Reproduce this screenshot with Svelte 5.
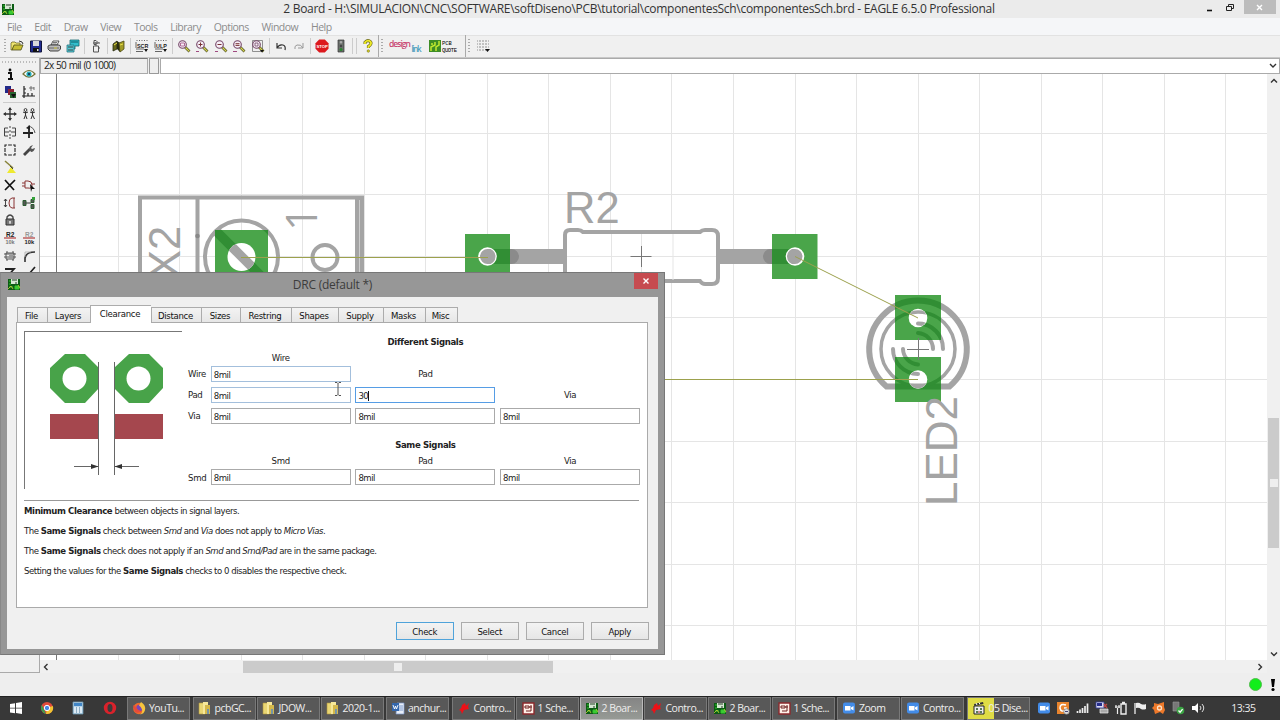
<script lang="ts">
	type Shape = {
		d?: string;
		f?: string;
		s?: string;
		w?: number;
		t?: string;
		x?: number;
		y?: number;
		size?: number;
	};

	const p = (d: string, f = 'none', s = 'none', w = 1): Shape => ({ d, f, s, w });
	const t = (text: string, x: number, y: number, size: number, f = '#222'): Shape => ({ t: text, x, y, size, f });
	const disc = (x: number, y: number, r: number) => `M${x - r} ${y}a${r} ${r} 0 1 0 ${r * 2} 0a${r} ${r} 0 1 0 ${-r * 2} 0`;

	const lens = (extra: Shape[]) => [
		p('M8 8l4.5 4.5', 'none', '#55552a', 2.6),
		p('M8.5 8.5l3.8 3.8', 'none', '#d8d850', 1.2),
		p(disc(5.5, 5.5, 3.8), '#f6eef6', '#754668', 1.1),
		...extra
	];

	const icons: Record<string, Shape[]> = {
		board: [
			p('M1 2h12v11H1z', '#0b5c14'),
			p('M4 2h7v5H4z', '#d5e8d2'),
			p('M2 4h2M2 7h2M2 10h4M8 9h4v3H8z', '#3ecb36', '#35c72d'),
			p('M5 3h5M9 5v2', 'none', '#263c29'),
			p('M1 12l3-3 2 3M11 8l2 3', 'none', '#e7d73b', 0.7)
		],
		sch: [
			p('M2 2h11v11H2z', '#fff0e8', '#8c292c', 1.4),
			p('M4 5h4v2H4zM8 6h3M5 10h5M10 4v6', 'none', '#6f2020')
		],
		open: [
			p('M1 4l1-1h3l1 1h4v3H4l-2 4H1z', '#efe570', '#6e6b2a', 0.8),
			p('M2 11l2-5h9l-2 5z', '#c7be35', '#4e4c17', 0.8),
			p('M9 2l3 1 1 2', 'none', '#333')
		],
		save: [p('M1.5 2h11v11h-11z', '#222c91', '#10143c'), p('M4 2h6v5H4z', '#d8d8dd'), p('M4 9h6v4H4z', '#111'), p('M8 10h1.5v2H8z', '#ddd')],
		print: [
			p('M4 6l2-4h6l-2 4z', '#fff', '#444', 0.9),
			p('M1 7l2-1h9l1.5 1v3l-2 2H3l-2-2z', '#bbb', '#333', 0.9),
			p('M2 9h10M6 3.5h4M5.5 5h4', 'none', '#555', 0.8),
			p('M7 9h3', 'none', '#d7cf46')
		],
		cam: [
			p('M4 1h9v6H9v3H4z', '#31bfcd', '#12646c', 0.8),
			p('M1 6h7v7H1z', '#57cbd6', '#277580', 0.8),
			p('M5 3h7', 'none', '#176d77', 1.2),
			p('M2 8h5M2 11h5', 'none', '#333', 0.9)
		],
		gate: [p('M4.5 7h5v6h-5zM7 3v4M4 4h7M5 1.5h2l2 2-2 2H5zM4 9h1M9 9h2', 'none', '#555', 1)],
		library: [
			p('M1 5l4-3v8l-4 2z', '#65661a', '#282b12', 0.8),
			p('M5 2l3 2v9l-3-3z', '#282b12'),
			p('M7 4l5-2v8l-4 3z', '#a19b28', '#4a4912', 0.8),
			p('M2 6l3-2M8 6l3-1', 'none', '#e9df47')
		],
		scr: [p('M1.5 1.5h1M4 1.5h1M6.500 1.500h1M9 1.500h1M11.500 1.500h1M1 10h8M1 12.500h7M1 3v6', 'none', '#555', 0.9), t('SCR', 2, 8.5, 5.4), p('M9 10h4l-2 3z', '#111')],
		ulp: [p('M1.5 1.5h1M4 1.5h1M6.500 1.500h1M9 1.500h1M11.500 1.500h1M1 10h8M1 12.500h7M1 3v6', 'none', '#555', 0.9), t('ULP', 2, 8.5, 5.4), p('M9 10h4l-2 3z', '#111')],
		zoomFit: lens([p('M3.5 4h4v3h-4z', 'none', '#a04a80', 0.8)]),
		zoomIn: lens([p('M3.5 5.5h4M5.5 3.5v4', 'none', '#733'), p('M1 12.5h3', 'none', '#a04a80')]),
		zoomOut: lens([p('M3.5 5.5h4', 'none', '#733'), p('M1 12.5h3', 'none', '#a04a80')]),
		zoomRedraw: lens([p('M3.5 4.7h4M3.5 6.4h4', 'none', '#733'), p('M1 12.5h4', 'none', '#a04a80')]),
		zoomSelect: [p('M1.5 1.5h10v11h-10z', 'none', '#777', 0.8), ...lens([p('M4 4h3v3H4z', 'none', '#754668', 0.8)]), p('M9 11h4l-2 2.5z', '#111')],
		undo: [p('M3 4v5h5M3 9q2-4 6-3 3 1 2 5', 'none', '#333', 1.2)],
		redo: [p('M11 4v5H6M11 9Q9 5 5 6q-3 1-2 4', 'none', '#999', 1)],
		stop: [p('M4.2 .5h5.600L13.500 4.200v5.600L9.800 13.500H4.200L.5 9.800V4.200z', '#dc191d'), t('STOP', 1.4, 8.7, 4.2, '#fff')],
		traffic: [p('M4 1h6v12H4z', '#6c716d', '#333', 0.7), p(disc(7, 3.3, 1.3), '#aaa'), p(disc(7, 7, 1.3), '#444'), p(disc(7, 10.5, 1.5), '#27852d')],
		help: [p('M4 5V3.3q3-3 5.6-.5 1.5 2.2-2.2 4.7V9', 'none', '#6a681a', 3), p('M4 5V3.3q3-3 5.6-.5 1.5 2.2-2.2 4.7V9', 'none', '#eeea25', 1.8), p(disc(7.3, 12, 1.2), '#e7df22', '#6a681a', 0.6)],
		grid: [p('M1 2h12M1 5h12M1 8h12M1 11h9', 'none', '#666', 1.1), p('M2.500 1v12M5.500 1v12M8.500 1v12M11.500 1v8', 'none', '#f0f0f0', 1.6), p('M9 10h5l-2.5 3z', '#111')],
		info: [p(disc(7, 3, 1.4), '#111'), p('M5 6h3v6M5 12h5', 'none', '#111', 2)],
		eye: [p('M1 7q6-7 12 0-6 6-12 0z', '#fff', '#75763a', 1.2), p(disc(7, 7, 2.6), '#22a9b5'), p(disc(7, 7, 1), '#124')],
		layers: [p('M2 1h6v7H2z', '#222989'), p('M5 4h6v6H5z', '#8b2231'), p('M7 7h6v6H7z', '#286430'), p('M8 9h5l-2.5 4z', '#111')],
		mark: [p('M2 1v12M0 11h13M2 4h2M2 8h2M6 8v3M10 8v3', 'none', '#222', 1.2), p('M7 3h5M9 1v5M12 2v3', 'none', '#555', 0.8)],
		move: [p('M7 1v12M1 7h12', 'none', '#333', 1.3), p('M7 0l2 3H5zM7 14l-2-3h4zM0 7l3-2v4zM14 7l-3 2V5z', '#333')],
		copy: [p('M3.5 4v4M10.5 4v4M1 5l2.5 1L6 5M8 5l2.5 1L13 5M3.5 8L2 12M3.5 8L5 12M10.5 8L9 12M10.5 8l2 4', 'none', '#333', 1), p(disc(3.5, 3, 1.4), '#fff', '#333'), p(disc(10.5, 3, 1.4), '#fff', '#333')],
		mirror: [p('M5 3H1.5v8H5M9 3h3.5v8H9M2 7h4M8 7h4', 'none', '#444'), p('M7 1v2M7 5v2M7 9v2M7 12v2', 'none', '#444')],
		rotate: [p('M7 2v11M1 8h10', 'none', '#222', 1.8), p('M6 1q6 1 7 7', 'none', '#555'), p('M4 3l4-3v5z', '#222')],
		group: [p('M2 2h10v10H2z', 'none', '#222', 1.1), p('M4.5 1v12M9.5 1v12M1 4.5h12M1 9.5h12', 'none', '#f0f0f0', 1.2)],
		wrench: [p('M2 12l6-6', 'none', '#444', 2.8), p('M7 6q0-3 4-4l-2 3 1 1 3-1q-1 4-4 4z', '#555')],
		paint: [p('M2 1l8 7', 'none', '#88843b', 1.5), p('M8 7l5 6H4z', '#eee92f'), p('M7 6l3 3', 'none', '#444', 1)],
		del: [p('M2 2l9 10M12 2L2 12', 'none', '#111', 1.7)],
		gateDelete: [p('M3 3h3q4 0 4 4t-4 3H3zM0 5h3M0 8h3M10 6h3', 'none', '#8a3434'), p('M8 6l5 5-3 0-1 3z', '#111')],
		pinswap: [p('M12 2H9Q6 2.500 6 7t3 5h3M11 2v10', 'none', '#8a3434'), p('M2.500 3v8M1 5l1.500-2L4 5M1 9l1.500 2L4 9', 'none', '#333', 0.9)],
		replace: [p('M1 7h4M5 7h4', 'none', '#333'), p('M1 4.500h3v5H1zM9 8.500h3v4H9zM9 3.500h3v3H9z', '#555', '#2b5c30'), p('M10 1h3v3h-3z', '#34a13a')],
		lock: [p('M4 6V4q3-4 6 0v2', 'none', '#444', 1.3), p('M3 6h8v6H3z', '#777', '#333'), p('M7 8v3M6 9h2', 'none', '#eee')],
		name: [t('R2', 3, 6, 6.5), p('M1 7h12', 'none', '#b33c3c', 1.2), t('10k', 2.5, 13, 5.5, '#777')],
		value: [t('R2', 3, 6, 6.5, '#999'), p('M1 7h12', 'none', '#b33c3c', 1.2), t('10k', 2.5, 13, 5.8)],
		smash: [p('M3 4h8v6H3zM1 5h12M1 8h12M4 2v2M10 2v2M4 10v2M10 10v2', 'none', '#555'), p('M6 6h4v4H6z', '#999')],
		miter: [p('M3 13V9q1-6 10-6', 'none', '#333', 1.6), p('M3 8V3h6', 'none', '#aaa', 0.8)],
		split: [p('M2 3h9L3 12', 'none', '#222', 1.8)],
		route: [p('M13 1L7 8l-3 3', 'none', '#222', 1.7)],
		windows: [p('M1 3l5-.8v4.6H1zM7 2l6-1v5.8H7zM1 7.6h5v4.6l-5-.7zM7 7.6h6V13l-6-.9z', '#fff')],
		chrome: [
			p(disc(7, 7, 6), '#e04b3b'),
			p('M1.8 4L6 12.8A6 6 0 0 1 1.8 4z', '#39a14c'),
			p('M7 7l5.8-2A6 6 0 0 1 6 12.9z', '#f2c432'),
			p(disc(7, 7, 2.7), '#4a87e6', '#fff', 1)
		],
		calc: [p('M2 1h10v12H2z', '#b7d4e8', '#6b94ad', 0.8), p('M3 2h8v3H3z', '#4085c6'), p('M3 7h8M3 9h8M3 11h8', 'none', '#fff'), p('M5.5 6v6M8.5 6v6', 'none', '#6b94ad', 0.7)],
		opera: [p(disc(7, 7, 6.2), '#d9222b'), p('M4.5 7a2.5 4 0 1 0 5 0a2.5 4 0 1 0-5 0', '#3b3b3b')],
		firefox: [
			p(disc(7, 7.5, 5.8), '#ee6a2b'),
			p(disc(7.5, 7, 3.2), '#7746b8'),
			p('M9 1q5 3 4 8-1 4-5 4.5 3-2 2-5-1-3-3-4z', '#f6c43d'),
			p('M1 4l3 2q2 4 6 4-4 3-7 1z', '#e64b3b')
		],
		folder: [p('M1 2h5l1 1v10H1z', '#e9d673', '#ae963d', 0.6), p('M5 1h5v12H5z', '#f6e89a'), p('M7 4h5v9H7z', '#d4b84b'), p('M9 8h2v5H9z', '#7595a8')],
		word: [p('M6 2h7v11H5z', '#e8eef8', '#7d9acb', 0.7), p('M7 5h5M7 7h5M7 9h5', 'none', '#6285c0', 0.8), p('M1 2h7v8H1z', '#3467ac'), p('M2 4l1.5 4 1-3 1 3L7 4', 'none', '#fff', 0.9)],
		eagle: [p('M2 9q3-2 3-5l3-2 1 3 3-3-1 4 1 2-5 1-2 4-1-3z', '#ed1117')],
		zoom: [p('M3 1.5h8q2 0 2 2v7q0 2-2 2H3q-2 0-2-2v-7q0-2 2-2z', '#438ce8'), p('M3 5h5.5v4.5H3zM9 6.5L11.5 5v4.5L9 8z', '#fff')],
		clap: [p('M2 5h10v8H2z', '#eee', '#222'), p('M2 3l9-2 .5 2-9 2z', '#333'), p('M4 2l1 2M7 1.5l1 2', 'none', '#fff'), p('M4 7h2v2H4zM8 7h2v2H8zM4 10h2v2H4zM8 10h2v2H8z', '#5a7b56'), p('M7 10v2', 'none', '#a33')],
		update: [p('M1 1h12v12H1z', '#e8842d'), p('M10 4q-6-2-6 3 1 5 6 2V7H8', 'none', '#fff', 1.5), p(disc(10.5, 10.5, 2.8), '#ddd', '#7a7a7a', 0.7), p('M9 10.5h3', 'none', '#447')],
		signal: [p('M2.5 12v-2M5 12V8.5M7.5 12V7M10 12V5M12.5 12V2.5', 'none', '#eee', 1.7)],
		network: [p('M1 1h8v6H1z', '#d9d9ee', '#333c9e', 0.8), p('M2 2h5v3H2z', '#262e8d'), p('M5 8h8v4H5z', '#aaa', '#eee', 0.7), p('M9 3l3 4M12 3L9 6', 'none', '#bb4747', 1.3)],
		battery: [p('M7 3h5v10H7zM8 1.5h3', 'none', '#eee', 1.4), p('M1 6h5M2 4v3M5 4v3M3.5 7v6', 'none', '#eee', 1.2)],
		flag: [p('M2 2v11', 'none', '#eee', 1.3), p('M3 2q3-1 5 1 3 1 5 0v5q-3 1-5 0-2-2-5-1z', '#eee')],
		avast: [p('M2 2l4 1 6-2v5l1 3-2 4-3-2-5 2-1-4-2-2 2-2z', '#ee792a'), p(disc(7.5, 7, 2), 'none', '#ffe2c5', 1.3)],
		usb: [p('M2 1h6v7l2 2H2z', '#777', '#999', 0.6), p(disc(9.5, 9.5, 3.8), '#3aa443'), p('M7.5 9.5l1.6 1.7 2.5-3', 'none', '#fff', 1.3)],
		sound: [p('M1 5h3l3-3v10L4 9H1z', '#fff'), p('M9 5q2 2 0 4M11 3q3.5 4 0 8', 'none', '#ddd', 1)]
	};

	const menus = ['File', 'Edit', 'Draw', 'View', 'Tools', 'Library', 'Options', 'Window', 'Help'];

	const toolbar = [
		['open', 'save', 'print', 'cam'],
		['gate'],
		['library'],
		['scr', 'ulp'],
		['zoomFit', 'zoomIn', 'zoomOut', 'zoomRedraw', 'zoomSelect'],
		['undo', 'redo'],
		['stop', 'traffic']
	];

	const commands = [
		'move', 'copy', 'mirror', 'rotate', 'group', 'wrench', 'paint', '', 'del', 'gateDelete',
		'pinswap', 'replace', 'lock', '', 'name', 'value', 'smash', 'miter', 'split', 'route'
	];

	const tabs = ['File', 'Layers', 'Clearance', 'Distance', 'Sizes', 'Restring', 'Shapes', 'Supply', 'Masks', 'Misc'];
	const tabWidths = [30, 43, 61, 50, 39, 51, 47, 45, 42, 33];
	let activeTab = $state('Clearance');

	const taskGroups = [
		[['firefox', 'YouTu...']],
		[['folder', 'pcbGC...'], ['folder', 'JDOW...'], ['folder', '2020-1...']],
		[['word', 'anchur...']],
		[['eagle', 'Contro...'], ['sch', '1 Sche...'], ['board', '2 Boar...', 'active'], ['eagle', 'Contro...'], ['board', '2 Boar...'], ['sch', '1 Sche...']],
		[['zoom', 'Zoom'], ['zoom', 'Contro...']],
		[['clap', '05 Dise...', 'progress']]
	];

	const tray = ['zoom', 'update', 'signal', 'network', 'battery', 'flag', 'avast', 'usb', 'sound'];

	const gridX = Array.from({ length: 19 }, (_, i) => Math.round(117.5 + i * 61.55) + 0.5);
	const gridY = Array.from({ length: 9 }, (_, i) => Math.round(132.6 + i * 61.6) + 0.5);
</script>

{#snippet icon(name: string)}
	<svg class="icon" viewBox="0 0 14 14">
		{#each icons[name] ?? [] as s}
			{#if s.t}
				<text x={s.x} y={s.y} font-size={s.size} fill={s.f}>{s.t}</text>
			{:else}
				<path d={s.d} fill={s.f} stroke={s.s} stroke-width={s.w} />
			{/if}
		{/each}
	</svg>
{/snippet}

{#snippet field(value: string, kind = '')}
	<div class="field {kind}">{value}</div>
{/snippet}

<div class="screen">
	<header class="titlebar">
		<span class="app-icon">{@render icon('board')}</span>
		<h1>2 Board - H:\SIMULACION\CNC\SOFTWARE\softDiseno\PCB\tutorial\componentesSch\componentesSch.brd - EAGLE 6.5.0 Professional</h1>
		<div class="win-buttons">
			<svg viewBox="0 0 74 18">
				<path d="M1 10.5h5" stroke="#111" stroke-width="1.6" />
				<path d="M20.500 6.500h5v4h-5zM22.500 6V4.500h5v4H26" fill="none" stroke="#222" />
				<path d="M38 0h32v14H38z" fill="#bcbcbc" />
				<path d="M51 5l5 5M56 5l-5 5" stroke="#fff" stroke-width="1.4" />
			</svg>
		</div>
	</header>

	<nav class="menubar">
		{#each menus as item}<span>{item}</span>{/each}
	</nav>

	<div class="toolbar">
		<i class="grip"></i>
		{#each toolbar as group}
			{#each group as name}<span class="tool">{@render icon(name)}</span>{/each}
			<i class="sep"></i>
		{/each}
		<i class="sep"></i>
		<span class="tool">{@render icon('help')}</span>
		<i class="edge"></i>
		<i class="grip"></i>
		<svg class="designlink" viewBox="0 0 34 18">
			<text x="0" y="10" font-size="8.500" fill="#c94471" textLength="22">design</text>
			<text x="22.500" y="15" font-size="8" fill="#4b9dbc" textLength="10">link</text>
		</svg>
		<svg class="quote" viewBox="0 0 30 14">
			<path d="M1 1h12v12H1z" fill="#3e8d24" />
			<path d="M3 12V8l4-2V3M8 12V8l3-2V2M3 5h2" fill="none" stroke="#c1e82f" stroke-width="1.500" />
			<text x="14" y="6" font-size="5.500">PCB</text>
			<text x="14" y="12.500" font-size="5.500" textLength="15">QUOTE</text>
		</svg>
		<i class="edge"></i>
		<i class="grip"></i>
		<span class="tool grid-tool">{@render icon('grid')}</span>
	</div>

	<main class="workspace">
		<aside class="commands">
			<i class="hgrip"></i>
			<div class="pair">
				{#each ['info', 'eye', 'layers', 'mark'] as name}<span>{@render icon(name)}</span>{/each}
			</div>
			<hr />
			<div class="pair">
				{#each commands as name}<span>{@render icon(name)}</span>{/each}
			</div>
		</aside>

		<section class="editor">
			<div class="command-line">
				<span class="coords">2x 50 mil (0 1000)</span>
				<span class="cell"></span>
				<span class="input"><svg viewBox="0 0 8 8"><path d="M1 2l3 3 3-3" fill="none" stroke="#333" stroke-width="1.400" /></svg></span>
			</div>

			<div class="view">
				<svg class="canvas" viewBox="40 74 1227 586">
					<defs>
						<clipPath id="pads">
							<path d="M215 230h53v53h-53zM465 234h45v45h-45zM772 234h45.500v45H772zM895 295h46v45h-46zM895 357h46v45h-46z" />
						</clipPath>
						<clipPath id="holes">
							<circle cx="241.500" cy="257" r="14" />
							<circle cx="487.500" cy="256.500" r="8" />
							<circle cx="795" cy="256.500" r="8" />
							<circle cx="918" cy="318" r="9" />
							<circle cx="918" cy="379.500" r="9" />
						</clipPath>
						<g id="silk" fill="none" stroke="currentColor" stroke-width="4">
							<path d="M140 300V197.500h222V300M197.500 198v100M357 198v100" />
							<circle cx="241.500" cy="257" r="36.500" />
							<path d="M216 231l50 50" stroke-width="9.500" />
							<circle cx="325" cy="257.500" r="12.500" />
							<path d="M487.500 256.500H564M719 256.500h76" stroke-width="15" stroke-linecap="round" />
							<path d="M565 279V235q0-5 5-5h8q3 0 5 2h117q2-2 5-2h7q6 0 6 6v42q0 6-6 6h-7q-3 0-5-3H583q-2 3-5 3h-8q-5 0-5-5z" fill="#fff" />
							<path d="M886.500 386.500a48.800 48.800 0 1 1 63 0z" stroke-width="6" />
							<circle cx="918" cy="349" r="37" stroke-width="3.500" />
							<path d="M918 323.500a25 25 0 0 1 25 25.500M918 333a16 16 0 0 1 15 16M918 374a25 25 0 0 1-25-25M918 364.500a16 16 0 0 1-15-15.500" stroke-linecap="round" />
						</g>
					</defs>

					{#each gridX as x}<path class="grid-line" d="M{x} 74v586" />{/each}
					{#each gridY as y}<path class="grid-line" d="M40 {y}h1227" />{/each}
					<path d="M56.500 74v586" stroke="#777" />

					<use href="#silk" color="#a4a4a4" />
					<path d="M357 198h6v90h-6z" fill="#a4a4a4" />
					<path d="M359.500 200v90" stroke="#ccc" />
					<path d="M641.500 234v46M611.500 234v46M673 234v46M567 256.500h149" class="grid-line" />
					<circle cx="197.500" cy="236" r="2.300" fill="#888" />
					<path d="M510 249h1.500a7.500 7.500 0 0 1 0 15H510zM772 249h-1.500a7.500 7.500 0 0 0 0 15h1.500z" fill="#8b8b8b" />
					<path d="M215 230h53v53h-53zM465 234h45v45h-45zM772 234h45.500v45H772zM895 295h46v45h-46zM895 357h46v45h-46z" fill="#4aa54a" />
					<use href="#silk" color="#318e34" clip-path="url(#pads)" />
					<g fill="#fff">
						<circle cx="241.500" cy="257" r="14" />
						<circle cx="487.500" cy="256.500" r="9.300" />
						<circle cx="795" cy="256.500" r="9.300" />
						<circle cx="918" cy="318" r="9.300" />
						<circle cx="918" cy="379.500" r="9.300" />
					</g>
					<use href="#silk" color="#a4a4a4" clip-path="url(#holes)" />

					<path d="M241 257.500h247M795 256.500l123 61.500M600 379.500h318" fill="none" stroke="#9ca14d" />
					<path d="M630.500 256.500h21M641.500 246v21M907 349.500h22M918.500 338v22" stroke="#777" />

					<g class="silk-text">
						<text x="564" y="222.500" font-size="43.500">R2</text>
						<text transform="translate(957 506) rotate(-90)" font-size="44">LED2</text>
						<text transform="translate(179.500 279) rotate(-90)" font-size="43.500">X2</text>
						<text class="pin" transform="translate(317 231) rotate(-90)" font-size="43">1</text>
					</g>
				</svg>

				<div class="vscroll">
					<svg viewBox="0 0 8 8"><path d="M1 5.500l3-3 3 3" /></svg>
					<div class="thumb"><i></i></div>
					<svg viewBox="0 0 8 8"><path d="M1 2.500l3 3 3-3" /></svg>
				</div>
			</div>

			<div class="hscroll">
				<svg viewBox="0 0 8 8"><path d="M5.500 1l-3 3 3 3" /></svg>
				<div class="thumb"><i></i></div>
				<svg viewBox="0 0 8 8"><path d="M2.500 1l3 3-3 3" /></svg>
			</div>
		</section>
	</main>

	<footer class="status">
		<span class="led"></span>
		<svg class="bang" viewBox="0 0 6 14"><path d="M1 1h4L4 9H2z" /><circle cx="3" cy="11.500" r="1.600" /></svg>
	</footer>

	<div class="taskbar">
		<div class="pinned">
			{#each ['windows', 'chrome', 'calc', 'opera'] as name}<span>{@render icon(name)}</span>{/each}
		</div>
		<div class="tasks">
			{#each taskGroups as group}
				<div class="task-group">
					{#each group as [name, label, state = '']}
						<div class="task {state}">{@render icon(name)}<span>{label}</span></div>
					{/each}
				</div>
			{/each}
		</div>
		<div class="tray">
			{#each tray as name}<span>{@render icon(name)}</span>{/each}
		</div>
		<time>13:35</time>
	</div>

	<div class="dialog" role="dialog" aria-label="DRC">
		<div class="dialog-title">
			<span class="dialog-icon">{@render icon('board')}</span>
			<h2>DRC (default *)</h2>
			<div class="close"><svg viewBox="0 0 8 8"><path d="M1.500 1.500l5 5M6.500 1.500l-5 5" stroke="#fff" stroke-width="1.400" /></svg></div>
		</div>
		<div class="dialog-body">
			<div class="tabs">
				{#each tabs as tab, i}
					<button class="tab" class:active={tab === activeTab} style="width: {tabWidths[i]}px" onclick={() => (activeTab = tab)}>{tab}</button>
				{/each}
			</div>
			<div class="panel">
				<div class="top">
					<div class="preview">
						<svg viewBox="0 0 158 158">
							<g fill="#48a349">
								<path d="M40 23h20l14 14v20L60 72H40L25 57V37zM104 23h20l14 14v20l-14 15h-20L89 57V37z" />
							</g>
							<path d="M25 83h49v25H25zM89 83h49v25H89z" fill="#a5474e" />
							<circle cx="49.500" cy="47.500" r="12" fill="#fff" />
							<circle cx="113.500" cy="47.500" r="12" fill="#fff" />
							<path d="M73.500 31v113M89.500 31v113M49 135.500h24M90 135.500h24" stroke="#666" fill="none" />
							<path d="M66 133l7.500 2.500-7.500 2.500zM97 133l-7.500 2.500 7.500 2.500z" fill="#333" />
						</svg>
					</div>
					<div class="clearances">
						<b class="heading">Different Signals</b>
						<span></span><em>Wire</em><em></em><em></em>
						<span>Wire</span>{@render field('8mil', 'warm')}<em>Pad</em><em></em>
						<span>Pad</span>{@render field('8mil', 'warm')}{@render field('30', 'focus')}<em>Via</em>
						<span>Via</span>{@render field('8mil')}{@render field('8mil')}{@render field('8mil')}
						<b class="heading same">Same Signals</b>
						<span></span><em>Smd</em><em>Pad</em><em>Via</em>
						<span>Smd</span>{@render field('8mil')}{@render field('8mil')}{@render field('8mil')}
					</div>
				</div>
				<div class="notes">
					<p><b>Minimum Clearance</b> between objects in signal layers.</p>
					<p>The <b>Same Signals</b> check between <i>Smd</i> and <i>Via</i> does not apply to <i>Micro Vias</i>.</p>
					<p>The <b>Same Signals</b> check does not apply if an <i>Smd</i> and <i>Smd/Pad</i> are in the same package.</p>
					<p>Setting the values for the <b>Same Signals</b> checks to 0 disables the respective check.</p>
				</div>
			</div>
			<div class="buttons">
				<button class="default">Check</button>
				<button>Select</button>
				<button>Cancel</button>
				<button>Apply</button>
			</div>
		</div>
		<svg class="ibeam" viewBox="0 0 8 14"><path d="M1 .5h2l1 1 1-1h2M4 1.500v11M1 13.500h2l1-1 1 1h2" fill="none" stroke="#555" /></svg>
	</div>
</div>

<style>
	:global(body) {
		overflow: hidden;
	}

	.screen {
		position: relative;
		width: 1280px;
		height: 720px;
		display: flex;
		flex-direction: column;
		overflow: hidden;
		background: #eee;
		font-family: 'Open Sans', 'Noto Sans', sans-serif;
		color: #222;
	}

	.screen * {
		box-sizing: border-box;
	}

	.icon {
		display: block;
		width: 14px;
		height: 14px;
		flex-shrink: 0;
	}

	.icon text {
		font-family: 'Liberation Sans', sans-serif;
		font-weight: bold;
		letter-spacing: 0;
	}

	/* main window */
	.titlebar {
		height: 18px;
		display: flex;
		align-items: center;
		background: #ebebeb;
	}

	.app-icon {
		width: 72px;
		padding-left: 1px;
	}

	h1 {
		flex: 1;
		margin: 0;
		font-size: 12px;
		font-weight: 400;
		letter-spacing: -0.29px;
		line-height: 18px;
		text-align: center;
		white-space: nowrap;
		color: #333;
	}

	.win-buttons {
		width: 74px;
		height: 18px;
	}

	.win-buttons svg {
		display: block;
	}

	.menubar {
		height: 17px;
		display: flex;
		align-items: center;
		gap: 12.8px;
		padding-left: 7px;
		background: #f5f6f8;
		font-size: 10.5px;
		letter-spacing: -0.52px;
		color: #8c8c8c;
	}

	.toolbar {
		height: 23px;
		display: flex;
		align-items: center;
		padding: 0 0 1px 2px;
		background: #f0f0f0;
		border-top: 1px solid #e2e2e2;
		border-bottom: 1px solid #c8c8c8;
	}

	.tool {
		width: 18.6px;
		display: flex;
		justify-content: center;
	}

	.sep {
		width: 1px;
		height: 16px;
		margin: 0 1.7px;
		background: #ccc;
	}

	.edge {
		width: 1px;
		height: 22px;
		background: #aaa;
	}

	.grip {
		width: 2px;
		height: 15px;
		margin: 0 2px;
		background: repeating-linear-gradient(#aaa 0 1px, transparent 1px 3px);
	}

	.designlink {
		width: 34px;
		height: 18px;
		margin: 0 5px 0 4px;
		font-weight: 600;
	}

	.quote {
		width: 30px;
		height: 14px;
		margin-right: 7px;
		font-family: 'Liberation Mono', monospace;
	}

	.grid-tool {
		margin-left: 2px;
	}

	.workspace {
		height: 615px;
		display: flex;
	}

	.commands {
		width: 40px;
		background: #f0f0f0;
		border-right: 1px solid #aaa;
		border-bottom: 1px solid #aaa;
	}

	.hgrip {
		display: block;
		height: 2px;
		margin: 3px 2px 2px;
		background: repeating-linear-gradient(90deg, #bbb 0 1px, transparent 1px 3px);
	}

	.pair {
		display: grid;
		grid-template-columns: 18.5px 18.5px;
		grid-auto-rows: 17.7px;
		padding-left: 1px;
		justify-items: center;
		align-items: center;
	}

	.commands hr {
		height: 1px;
		margin: 2px 3px;
		border: 0;
		background: #ccc;
	}

	.editor {
		flex: 1;
		display: flex;
		flex-direction: column;
	}

	.command-line {
		height: 16px;
		display: flex;
		font-size: 10px;
	}

	.coords {
		width: 108px;
		padding-left: 3px;
		line-height: 13px;
		letter-spacing: -0.75px;
		word-spacing: 0.8px;
		border: 1px solid #aaa;
		border-top-color: #777;
	}

	.cell {
		width: 10px;
		margin: 0 1px;
		border: 1px solid #999;
	}

	.input {
		flex: 1;
		display: flex;
		align-items: center;
		justify-content: flex-end;
		background: #fff;
		border: 1px solid #aaa;
	}

	.input svg {
		width: 8px;
		margin-right: 2px;
	}

	.view {
		height: 586px;
		display: flex;
	}

	.canvas {
		display: block;
		width: 1227px;
		height: 586px;
		background: #fff;
	}

	.grid-line {
		stroke: #e5e5e5;
	}

	.silk-text {
		fill: #a4a4a4;
		font-family: 'Liberation Sans', sans-serif;
	}

	.pin {
		font-family: 'Open Sans', sans-serif;
	}

	.vscroll,
	.hscroll {
		display: flex;
		align-items: center;
		justify-content: space-between;
		background: #f0f0f0;
	}

	.vscroll {
		width: 13px;
		flex-direction: column;
		padding: 3px 0 2px;
	}

	.hscroll {
		height: 13px;
		width: 1227px;
		padding: 0 3px 0 2px;
	}

	.vscroll svg,
	.hscroll svg {
		width: 8px;
		height: 8px;
		fill: none;
		stroke: #333;
		stroke-width: 1.4;
	}

	.thumb {
		display: flex;
		align-items: center;
		justify-content: center;
		background: #cbcbcb;
	}

	.thumb i {
		width: 8px;
		height: 8px;
		background: #eee;
	}

	.vscroll .thumb {
		width: 11px;
		height: 130px;
		margin-top: 231px;
	}

	.hscroll .thumb {
		width: 310px;
		height: 12px;
		margin-right: 511px;
	}

	.status {
		height: 23px;
		display: flex;
		align-items: center;
		justify-content: flex-end;
		gap: 8px;
		padding-right: 4px;
	}

	.led {
		width: 13px;
		height: 13px;
		border: 1px solid #51bd4d;
		border-radius: 50%;
		background: #12ee1b;
	}

	.bang {
		width: 6px;
		height: 14px;
	}

	/* windows taskbar */
	.taskbar {
		height: 24px;
		display: flex;
		align-items: center;
		background: #383838;
		border-top: 1px solid #222;
		color: #eee;
		font-size: 10.5px;
	}

	.pinned {
		width: 127px;
		display: flex;
		padding-bottom: 1px;
	}

	.pinned span {
		width: 31.4px;
		display: flex;
		justify-content: center;
	}

	.tasks {
		display: flex;
		gap: 2.5px;
	}

	.task-group {
		display: flex;
		gap: 1px;
	}

	.task {
		width: 63px;
		height: 23px;
		display: flex;
		align-items: center;
		gap: 3px;
		padding: 0 0 2px 4px;
		border: 1px solid #797979;
		background: #585858;
		white-space: nowrap;
		letter-spacing: -0.5px;
	}

	.task.active {
		background: linear-gradient(#858585, #969a95);
		border-color: #bbb;
	}

	.task.progress {
		background: linear-gradient(90deg, #dfdc45 42%, #585858 42%);
	}

	.tray {
		display: flex;
		margin-left: 5px;
		padding-bottom: 1px;
	}

	.tray span {
		width: 19.2px;
		display: flex;
		justify-content: center;
	}

	time {
		margin-left: 24px;
		padding-bottom: 2px;
		font-size: 10.5px;
		letter-spacing: -0.5px;
	}

	/* DRC dialog */
	.dialog {
		position: absolute;
		left: 0;
		top: 272px;
		width: 665px;
		height: 383px;
		padding: 0 6px 5px 6px;
		background: #979797;
		border: 1px solid #777;
		border-left-color: #888;
		font-family: 'DejaVu Sans Condensed', 'DejaVu Sans', sans-serif;
		font-size: 9.5px;
		letter-spacing: -0.47px;
	}

	.dialog-title {
		height: 24px;
		display: flex;
		align-items: center;
		padding-bottom: 2px;
	}

	.dialog-icon {
		width: 24px;
	}

	h2 {
		flex: 1;
		margin: 0;
		font: 400 12px 'Open Sans', sans-serif;
		letter-spacing: -0.25px;
		text-align: center;
		color: #3c3c3c;
	}

	.close {
		width: 24px;
		height: 16px;
		display: flex;
		align-items: center;
		justify-content: center;
		align-self: flex-start;
		background: #c64b50;
	}

	.close svg {
		width: 8px;
		height: 8px;
	}

	.dialog-body {
		height: 352px;
		padding: 8px 10px 0 9px;
		background: #f0f0f0;
	}

	.tabs {
		height: 17px;
		display: flex;
		align-items: flex-end;
		padding-left: 1px;
	}

	button {
		padding: 0;
		font: inherit;
		letter-spacing: inherit;
		color: #111;
		background: linear-gradient(#f3f3f3, #e6e6e6);
		border: 1px solid #acacac;
	}

	.tab {
		height: 15px;
		flex-shrink: 0;
		padding-right: 2px;
		letter-spacing: -0.3px;
		border-bottom: 0;
		border-right-width: 0;
	}

	.tab:last-child {
		border-right-width: 1px;
	}

	.tab.active {
		height: 18px;
		margin-bottom: -1px;
		padding-bottom: 2px;
		background: #fff;
		z-index: 1;
	}

	.panel {
		height: 286px;
		padding: 8px 8px 0 7px;
		background: #fff;
		border: 1px solid #aaa;
	}

	.top {
		height: 170px;
		display: flex;
		border-bottom: 1px solid #999;
	}

	.preview {
		width: 158px;
		height: 158px;
		border-left: 1px solid #777;
		border-top: 1px solid #777;
	}

	.preview svg {
		display: block;
		width: 158px;
		height: 158px;
		margin-top: -1px;
	}

	.clearances {
		display: grid;
		grid-template-columns: 18px 140px 140px 140px;
		grid-template-rows: 20px 12px 21px 21px 21px 28px 12px 22px;
		column-gap: 4.7px;
		padding-left: 2px;
		margin-left: 4px;
		align-items: center;
		align-content: start;
	}

	.clearances span {
		letter-spacing: -0.3px;
	}

	.heading {
		grid-column: 2 / 5;
		text-align: center;
		font-size: 9.5px;
		letter-spacing: -0.35px;
	}

	.same {
		padding-top: 8px;
	}

	.clearances em {
		font-style: normal;
		text-align: center;
		letter-spacing: -0.3px;
	}

	.field {
		height: 16px;
		padding-left: 2px;
		line-height: 15px;
		border: 1px solid #aaa;
	}

	.warm {
		border-color: #a3bfdc;
	}

	.focus {
		border-color: #569de5;
	}

	.focus::after {
		content: '';
		display: inline-block;
		width: 1px;
		height: 10px;
		vertical-align: -2px;
		background: #111;
	}

	.notes p {
		height: 20px;
		margin: 0;
		line-height: 20px;
		white-space: nowrap;
	}

	.notes b {
		letter-spacing: -0.4px;
	}

	.buttons {
		display: flex;
		justify-content: flex-end;
		gap: 6.5px;
		padding-top: 14px;
		margin-right: -1px;
	}

	.buttons button {
		width: 58.5px;
		height: 18px;
		letter-spacing: -0.3px;
	}

	.buttons .default {
		border-color: #4fa3da;
	}

	.ibeam {
		position: absolute;
		left: 333px;
		top: 109px;
		width: 8px;
		height: 14px;
	}
</style>
